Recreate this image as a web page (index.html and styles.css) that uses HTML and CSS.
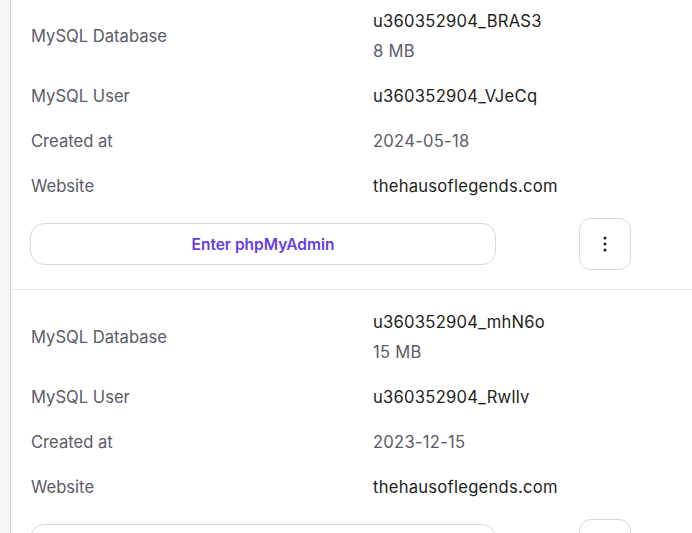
FILE: index.html
```html
<!DOCTYPE html>
<html>
<head>
<meta charset="utf-8">
<link rel="stylesheet" href="styles.css">
</head>
<body>
<div class="page">
  <aside class="side"></aside>
  <main class="list">
    <section class="card">
      <div class="row row-db">
        <div class="label">MySQL Database</div>
        <div class="value">
          <div class="strong">u360352904_BRAS3</div>
          <div class="muted">8 MB</div>
        </div>
      </div>
      <div class="row">
        <div class="label">MySQL User</div>
        <div class="value strong">u360352904_VJeCq</div>
      </div>
      <div class="row">
        <div class="label">Created at</div>
        <div class="value muted">2024-05-18</div>
      </div>
      <div class="row">
        <div class="label">Website</div>
        <div class="value strong">thehausoflegends.com</div>
      </div>
      <div class="actions">
        <button class="btn">Enter phpMyAdmin</button>
        <button class="kebab" aria-label="More">
          <svg width="4" height="16" viewBox="0 0 4 16"><circle cx="2" cy="2" r="1.5"/><circle cx="2" cy="8" r="1.5"/><circle cx="2" cy="14" r="1.5"/></svg>
        </button>
      </div>
    </section>
    <section class="card">
      <div class="row row-db">
        <div class="label">MySQL Database</div>
        <div class="value">
          <div class="strong">u360352904_mhN6o</div>
          <div class="muted">15 MB</div>
        </div>
      </div>
      <div class="row">
        <div class="label">MySQL User</div>
        <div class="value strong">u360352904_Rwllv</div>
      </div>
      <div class="row">
        <div class="label">Created at</div>
        <div class="value muted">2023-12-15</div>
      </div>
      <div class="row">
        <div class="label">Website</div>
        <div class="value strong">thehausoflegends.com</div>
      </div>
      <div class="actions">
        <button class="btn">Enter phpMyAdmin</button>
        <button class="kebab" aria-label="More">
          <svg width="4" height="16" viewBox="0 0 4 16"><circle cx="2" cy="2" r="1.5"/><circle cx="2" cy="8" r="1.5"/><circle cx="2" cy="14" r="1.5"/></svg>
        </button>
      </div>
    </section>
  </main>
</div>
</body>
</html>
```

FILE: styles.css
```css
html, body {
  margin: 0;
  padding: 0;
  background: #ffffff;
  overflow: hidden;
}
body {
  font-family: Inter, "Open Sans", sans-serif;
  font-size: 16.6px;
  color: #1d1e20;
}
.page {
  display: flex;
  height: 533px;
  overflow: hidden;
}
.side {
  width: 10px;
  flex: none;
  background: #f4f5f7;
  border-right: 1px solid #d8d8dc;
}
.list {
  flex: 1;
  margin-top: -11px;
}
.card {
  padding: 10px 0 19px 20px;
  border-bottom: 1px solid #e3e3e6;
}
.row {
  display: flex;
  align-items: center;
  height: 45px;
}
.row-db {
  height: 75px;
}
.label {
  width: 342px;
  flex: none;
  color: #5b5b66;
  margin-bottom: 2px;
}
.value {
  display: flex;
  flex-direction: column;
  gap: 6px;
  line-height: 24px;
  margin-bottom: 2px;
  letter-spacing: 0.25px;
}
.strong {
  color: #1d1e20;
}
.muted {
  color: #5b5b66;
}
.actions {
  display: flex;
  align-items: center;
  margin-top: 9px;
  height: 52px;
}
.btn {
  width: 466px;
  height: 42px;
  margin-left: -1px;
  border: 1px solid #dadade;
  border-radius: 14px;
  background: #fff;
  color: #673de6;
  font-family: inherit;
  font-size: 15.5px;
  font-weight: 600;
  cursor: pointer;
}
.kebab {
  width: 52px;
  height: 52px;
  margin-left: 83px;
  border: 1px solid #dadade;
  border-radius: 12px;
  background: #fff;
  display: flex;
  align-items: center;
  justify-content: center;
  padding: 0;
}
.kebab svg {
  fill: #1d1e20;
}
```
